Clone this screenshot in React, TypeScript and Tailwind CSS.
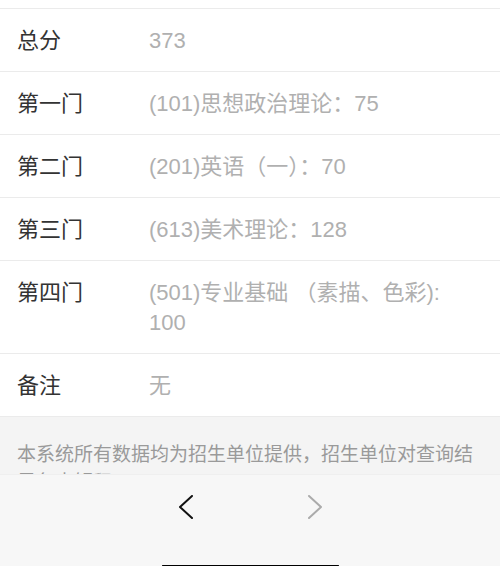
const rows = [
  { label: "总分", value: ["373"] },
  { label: "第一门", value: ["(101)思想政治理论：75"] },
  { label: "第二门", value: ["(201)英语（一）：70"] },
  { label: "第三门", value: ["(613)美术理论：128"] },
  { label: "第四门", value: ["(501)专业基础 （素描、色彩):", "100"] },
  { label: "备注", value: ["无"] },
];

const Chevron = ({ dir, color }: { dir: "left" | "right"; color: string }) => (
  <svg width="16" height="24" viewBox="0 0 16 24" fill="none">
    <polyline
      points={dir === "left" ? "14,1 2,12 14,23" : "2,1 14,12 2,23"}
      stroke={color}
      strokeWidth="2"
      strokeLinecap="round"
      strokeLinejoin="round"
    />
  </svg>
);

export default function App() {
  return (
    <div
      className="w-[500px] h-[566px] flex flex-col overflow-hidden bg-white"
      style={{ fontFamily: '"Liberation Sans", "Noto Sans CJK SC", sans-serif' }}
    >
      <div className="flex-1 overflow-hidden">
        <div className="h-[9px] border-b border-[#ebebeb]" />
        {rows.map((r) => (
          <div key={r.label} className="flex pt-[17px] pb-[15px] border-b border-[#ebebeb] last:border-b-0">
            <div className="w-[149px] shrink-0 pl-[17px] text-[22px] leading-[30px] text-[#333]">
              {r.label}
            </div>
            <div className="flex-1 pr-[17px] text-[22px] leading-[30px] text-[#b0b0b0]">
              {r.value.map((line) => (
                <div key={line}>{line}</div>
              ))}
            </div>
          </div>
        ))}
        <div className="bg-[#f4f4f4] px-[17px] pt-[24px] pb-6 text-[19px] leading-[28px] text-[#9a9a9a]">
          本系统所有数据均为招生单位提供，招生单位对查询结果负责解释。
        </div>
      </div>
      <div className="h-[92px] shrink-0 bg-[#f7f7f7] border-t border-[#efefef] flex flex-col items-center">
        <div className="flex gap-[113px] pt-[20px]">
          <Chevron dir="left" color="#111" />
          <Chevron dir="right" color="#ababab" />
        </div>
        <div className="mt-[46px] w-[177px] h-[6px] rounded-full bg-black" />
      </div>
    </div>
  );
}
